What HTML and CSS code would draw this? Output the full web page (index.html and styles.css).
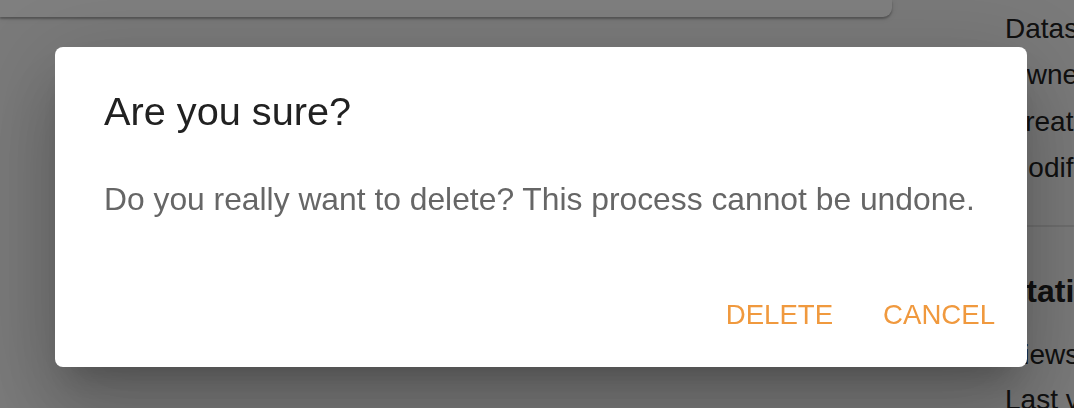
FILE: index.html
```html
<!DOCTYPE html>
<html lang="en">
<head>
<meta charset="utf-8">
<title>Confirm delete</title>
<link rel="stylesheet" href="styles.css">
</head>
<body>
<div class="page">
  <main class="main">
    <div class="card"></div>
  </main>
  <aside class="side">
    <div class="info">
      <div class="row">Dataset</div>
      <div class="row">Owner</div>
      <div class="row">Created</div>
      <div class="row">Modified</div>
    </div>
    <hr class="divider">
    <div class="stats">
      <h2 class="stats-title">Statistics</h2>
      <div class="row">Views</div>
      <div class="row">Last viewed</div>
    </div>
  </aside>
</div>
<div class="backdrop">
  <div class="dialog" role="dialog">
    <h2 class="dialog-title">Are you sure?</h2>
    <div class="dialog-content">
      <p class="dialog-text">Do you really want to delete? This process cannot be undone.</p>
    </div>
    <div class="dialog-actions">
      <button class="btn">DELETE</button>
      <button class="btn">CANCEL</button>
    </div>
  </div>
</div>
</body>
</html>
```

FILE: styles.css
```css
* { box-sizing: border-box; }
html, body {
  margin: 0;
  padding: 0;
  width: 1074px;
  height: 408px;
  overflow: hidden;
  background: #f4f4f4;
  font-family: "Liberation Sans", Arial, Helvetica, sans-serif;
}
.page {
  display: flex;
  height: 408px;
}
.main {
  width: 892px;
  flex: none;
}
.card {
  height: 17px;
  background: #ffffff;
  border-radius: 0 0 9px 0;
  box-shadow: 0 2px 2px rgba(0,0,0,0.25), 0 1px 6px rgba(0,0,0,0.12);
}
.side {
  flex: 1;
  margin-left: 113px;
  padding-top: 6px;
  white-space: nowrap;
  overflow: hidden;
  color: #212121;
}
.row {
  font-size: 28px;
  line-height: 46.4px;
}
.divider {
  border: 0;
  height: 2px;
  background: #dcdcdc;
  margin: 33px 0 0 -200px;
}
.stats-title {
  font-size: 32px;
  font-weight: 700;
  margin: 44px 0 0;
  line-height: 40px;
}
.stats .row {
  line-height: 45px;
}
.stats .row:first-of-type {
  margin-top: 21px;
}
.backdrop {
  position: fixed;
  inset: 0;
  background: rgba(0,0,0,0.5);
}
.dialog {
  position: absolute;
  left: 55px;
  top: 47px;
  width: 972px;
  height: 320px;
  background: #ffffff;
  border-radius: 8px;
  display: flex;
  flex-direction: column;
  box-shadow: 0 22px 30px -14px rgba(0,0,0,0.2), 0 48px 76px 6px rgba(0,0,0,0.14), 0 18px 92px 16px rgba(0,0,0,0.12);
}
.dialog-title {
  margin: 0;
  padding: 32px 49px 0;
  font-size: 39.7px;
  font-weight: 400;
  line-height: 64px;
  color: #212121;
}
.dialog-content {
  padding: 32px 48px 0 49px;
}
.dialog-text {
  margin: 0;
  font-size: 31.8px;
  line-height: 48px;
  color: #666666;
  white-space: nowrap;
}
.dialog-actions {
  margin-top: auto;
  padding: 16px;
  display: flex;
  justify-content: flex-end;
  gap: 18px;
}
.btn {
  font-family: inherit;
  font-size: 27.6px;
  line-height: 49px;
  padding: 12px 16px;
  border: 0;
  background: transparent;
  color: #f0993e;
  cursor: pointer;
}
```
